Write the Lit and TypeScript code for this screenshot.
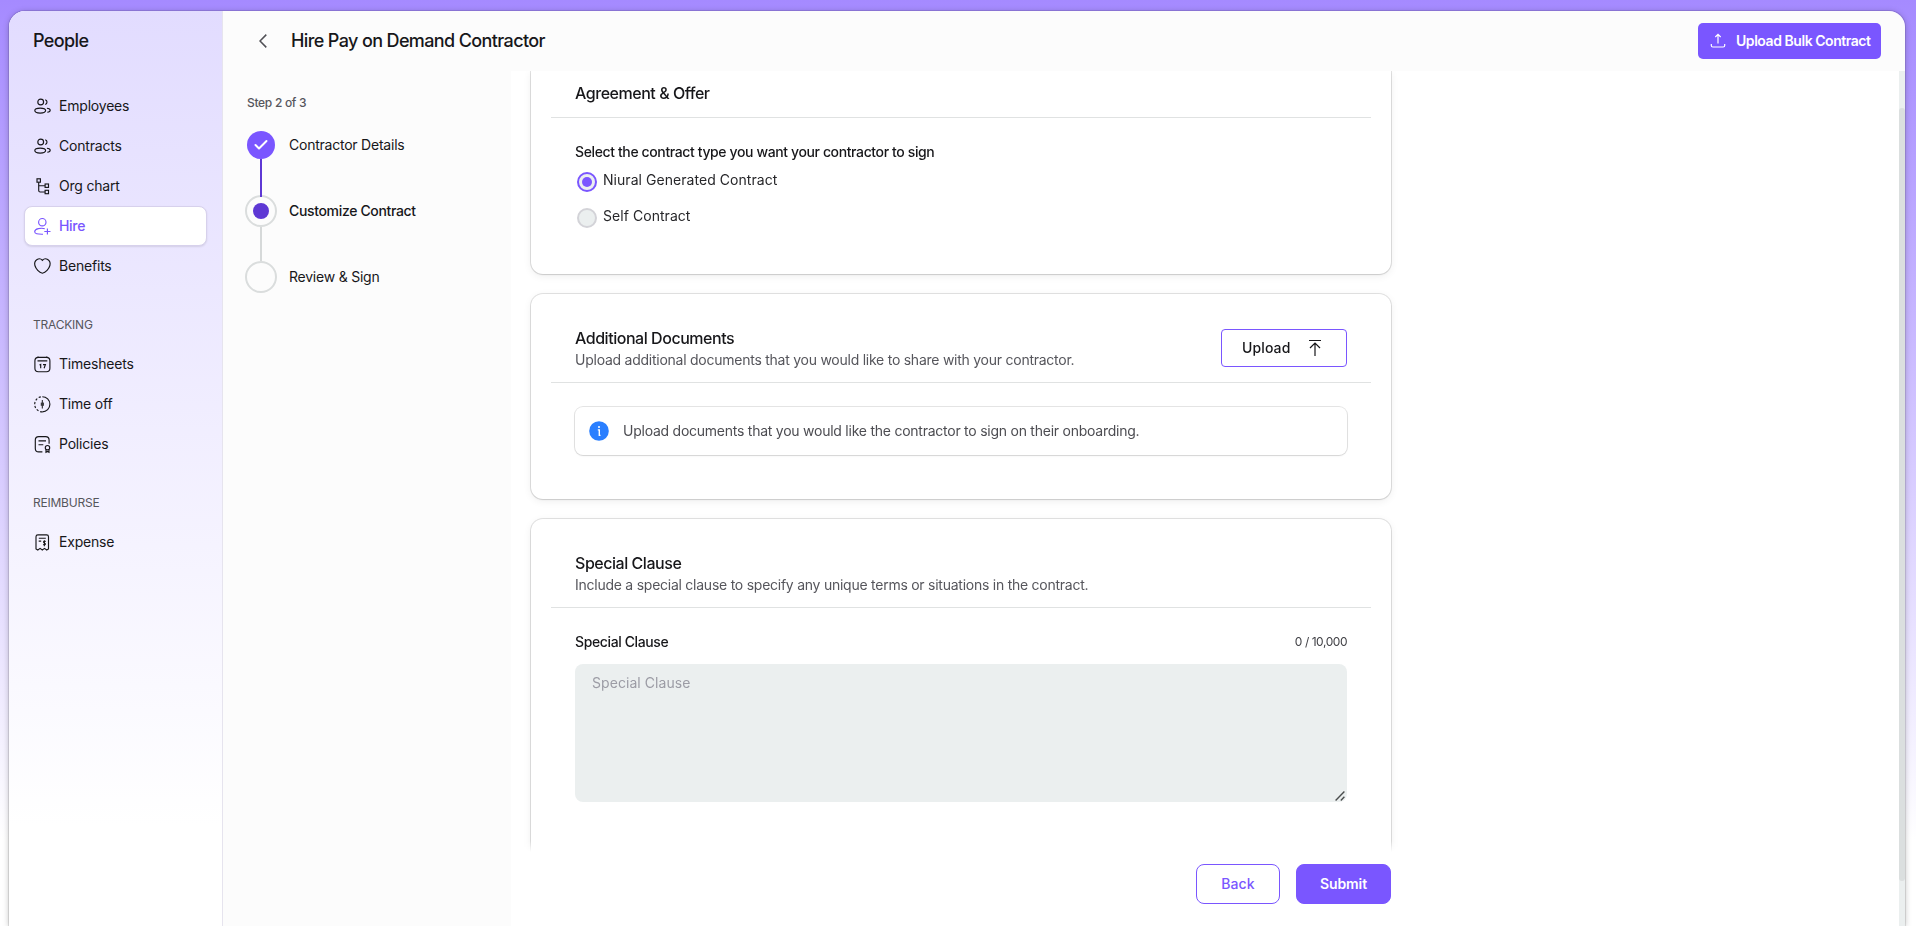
import { LitElement, html, css, svg } from "lit";
import { customElement } from "lit/decorators.js";

const ICONS: Record<string, unknown> = {
  people: svg`<circle cx="6.7" cy="4" r="2.9"/><ellipse cx="6.2" cy="12.6" rx="5.4" ry="2.5"/><path d="M11.2 1.700a2.500 2.500 0 0 1 0 4.800M12.900 10.300c1.900.2 3.300.9 3.300 1.900s-1 1.700-2.900 2"/>`,
  org: svg`<rect x="3" y=".8" width="3.400" height="3.400"/><rect x="11.100" y="6" width="3.400" height="3.400"/><rect x="11.100" y="12.300" width="3.400" height="3.400"/><path d="M4.700 4.200v8.300q0 1.500 1.500 1.500h4.900M4.700 7.700h6.400"/>`,
  hire: svg`<circle cx="8.300" cy="4.200" r="3.700"/><path d="M10.800 10.700c-3.900-1.200-10.100.1-10.100 3 0 2 2.600 2.600 8.300 2.500M13.400 10.400v6.200M10.300 13.500h6.200"/>`,
  heart: svg`<path d="M8.400 2.300C7 .7 4.700.5 3.100 1.500 1.100 2.800.3 5.200.9 7.500c.9 3.400 4.200 7 7.500 7.700 3.300-.7 6.600-4.300 7.500-7.700.6-2.300-.2-4.700-2.200-6C12.100.5 9.800.7 8.400 2.300z"/>`,
  calendar: svg`<rect x=".9" y="1.300" width="15" height="14.400" rx="3.500"/><path d="M3.500 4.900h9.800M4 .6v1.200M12.800 .6v1.200M5.500 9l1.200-.6v3.900M9 8.600h2.400l-1.300 3.700"/>`,
  timeoff: svg`<path d="M8.300.7a7.600 7.600 0 0 1 0 15.200"/><path d="M8.300 15.900a7.600 7.600 0 0 1 0-15.200" stroke-dasharray="2.200 1.800"/><path d="M8.300 4v8.500M7.300 6.600v3.200M9.300 6.600v3.200" stroke-width="1"/>`,
  policies: svg`<path d="M8.400 15.900H4.800Q1.300 15.900 1.300 12.400V4.100Q1.300.6 4.800.6h6.800Q15.100.6 15.100 4.100v3.600M4.500 4.900h7.500M4.500 8.700h4.800"/><circle cx="13.500" cy="11.700" r="2.200"/><path d="M12 13.600v2.700l1.500-.8 1.500.8v-2.700"/>`,
  expense: svg`<path d="M2 15V2.800Q2 .9 3.900.9h8.700Q14.500.9 14.500 2.800V15l-1.800 1-2.200-1.600L8.300 16l-2.200-1.600L3.800 16zM4.800 4.200h7M4.700 7.100h2.500"/><path d="M11.700 7.500c-2-1-3 .9-1.300 1.500 1.900.6.800 2.600-1.300 1.600M10.400 6.200v6"/>`,
};

interface NavItem { label: string; icon: string; active?: boolean }
interface NavGroup { title?: string; items: NavItem[] }

const NAV: NavGroup[] = [
  { items: [
    { label: "Employees", icon: "people" },
    { label: "Contracts", icon: "people" },
    { label: "Org chart", icon: "org" },
    { label: "Hire", icon: "hire", active: true },
    { label: "Benefits", icon: "heart" },
  ] },
  { title: "TRACKING", items: [
    { label: "Timesheets", icon: "calendar" },
    { label: "Time off", icon: "timeoff" },
    { label: "Policies", icon: "policies" },
  ] },
  { title: "REIMBURSE", items: [{ label: "Expense", icon: "expense" }] },
];

@customElement("side-nav")
export class SideNav extends LitElement {
  static styles = css`
    :host { display: block; box-sizing: border-box; width: 214px; flex: none; padding: 0 15px;
      border-right: 1px solid #e6e4ee;
      background: linear-gradient(180deg, #e2dcff 0, #fff 815px); }
    .title { margin: 0; padding-left: 9px; height: 75px; font-size: 18px; font-weight: 500; line-height: 60px; letter-spacing: -.6px; }
    .group { display: flex; flex-direction: column; }
    .caption { height: 20px; margin: 29px 0 0; padding: 0 0 9px 9px; line-height: 20px; font-size: 12px; color: #56565c; letter-spacing: -.22px; }
    .item { box-sizing: border-box; height: 40px; display: flex; align-items: center; gap: 8px; padding-left: 9px;
      font-size: 14px; letter-spacing: -.2px; color: #17171a; border: 1px solid transparent; border-radius: 8px; }
    .item.active { background: #fff; color: #7a56ff; font-weight: 500; border-color: #d7d1ec; box-shadow: 0 1px 2px #0000001a; letter-spacing: -.3px; }
    .text { padding-bottom: 2px; }
    .icon { width: 17px; height: 17px; fill: none; stroke: currentColor; stroke-width: 1.150; flex: none; overflow: visible; }
  `;
  render() {
    return html`<h1 class="title">People</h1>
      ${NAV.map((g) => html`<div class="group">
        ${g.title ? html`<p class="caption">${g.title}</p>` : null}
        ${g.items.map((i) => html`<a class="item ${i.active ? "active" : ""}">
          <svg class="icon" viewBox="0 0 17 17">${ICONS[i.icon]}</svg><span class="text">${i.label}</span></a>`)}
      </div>`)}`;
  }
}

@customElement("step-list")
export class StepList extends LitElement {
  static styles = css`
    :host { display: block; box-sizing: border-box; width: 288px; flex: none; padding: 22px 0 0 22px; }
    .count { margin: 0 0 0 2px; font-size: 12px; line-height: 20px; font-weight: 500; letter-spacing: -.3px; color: #56565c; }
    .steps { display: flex; flex-direction: column; padding-top: 15px; }
    .step { display: flex; align-items: center; gap: 12px; height: 34px; font-size: 14px; letter-spacing: -.23px; }
    .current { font-weight: 500; letter-spacing: -.34px; }
    .text { padding-bottom: 2px; }
    .mark { box-sizing: border-box; width: 32px; height: 32px; border: 2px solid #dadddd; border-radius: 50%; display: grid; place-items: center; }
    .mark.done { width: 28px; height: 28px; margin: 0 2px; background: #7a56ff; border: 0; }
    .dot { width: 16px; height: 16px; border-radius: 50%; background: #5e38d4; }
    .line { width: 2px; height: 34px; margin: -1px 0 -1px 15px; background: #d6d9d9; }
    .line.filled { background: #5e38d4; height: 38px; margin: -3px 0 -3px 15px; z-index: 1; }
    .check { width: 14px; height: 12px; fill: none; stroke: #fff; stroke-width: 2; stroke-linecap: round; stroke-linejoin: round; }
  `;
  render() {
    return html`<p class="count">Step 2 of 3</p>
      <div class="steps">
        <div class="step"><span class="mark done"><svg class="check" viewBox="0 0 14 12"><path d="M1.500 6 5 9.500 12.500 2"/></svg></span><span class="text">Contractor Details</span></div>
        <div class="line filled"></div>
        <div class="step current"><span class="mark"><span class="dot"></span></span><span class="text">Customize Contract</span></div>
        <div class="line"></div>
        <div class="step"><span class="mark"></span><span class="text">Review &amp; Sign</span></div>
      </div>`;
  }
}

@customElement("app-root")
export class AppRoot extends LitElement {
  static styles = css`
    :host { display: block; box-sizing: border-box; height: 926px; overflow: hidden; padding: 11px 11px 0 9px;
      font-family: Inter, "Liberation Sans", sans-serif; color: #17171a;
      background: linear-gradient(180deg, #a58aff 0, #fff 840px); }
    .frame { height: 915px; display: flex; border-radius: 16px 16px 0 0; overflow: hidden; background: #fcfcfc; }
    .shell { border-radius: 16px 16px 0 0; box-shadow: 0 0 0 1px #00000018, 0 1px 6px #00000040; }
    .main { flex: 1; min-width: 0; display: flex; flex-direction: column; }
    .top { height: 60px; display: flex; align-items: center; flex: none; padding: 0 24px 0 36px; }
    .chevron { width: 8px; height: 14px; fill: none; stroke: #505055; stroke-width: 1.500; }
    .heading { flex: 1; margin: 0 0 0 24px; font-size: 18px; line-height: 24px; font-weight: 500; letter-spacing: -.62px; }
    .bulk { height: 36px; width: 183px; box-sizing: border-box; border: 0; border-radius: 5px; background: #7a56ff; color: #fff;
      font: 600 14px Inter, sans-serif; letter-spacing: -.45px; display: flex; align-items: center; gap: 10px; padding: 0 0 0 12px; white-space: nowrap; }
    .bulk-icon { width: 16px; height: 16px; fill: none; stroke: #fff; stroke-width: 1.200; flex: none; }
    .text { padding-bottom: 2px; }
    .body { flex: 1; min-height: 0; display: flex; }
    .content { flex: 1; min-width: 0; height: 855px; background: #fff; display: flex; flex-direction: column; overflow: hidden; }
    .track { width: 6px; background: #ebefef; padding-top: 37px; box-sizing: border-box; }
    .thumb { height: 773px; background: #dbdfdf; border-radius: 3px; }
    .cards { height: 782px; flex: none; box-sizing: border-box; overflow: hidden; padding-left: 20px; display: flex; flex-direction: column; gap: 20px;
      -webkit-mask-image: linear-gradient(#000 770px, transparent 781px); mask-image: linear-gradient(#000 770px, transparent 781px); }
    .card { width: 860px; flex: none; box-sizing: border-box; border-radius: 12px; background: #fff; padding: 0 20px;
      box-shadow: 0 0 0 1px #0000001c, 0 1px 2px #00000014, 0 2px 8px #00000012; }
    .agreement { height: 203px; border-radius: 0 0 12px 12px; }
    .documents { height: 205px; }
    .clause { height: 380px; }
    .head { box-sizing: border-box; padding: 0 24px; border-bottom: 1px solid #e0e2e2; display: flex; justify-content: space-between; }
    .agreement .head { height: 47px; padding-top: 10px; }
    .documents .head, .clause .head { height: 89px; padding-top: 32px; }
    .name { margin: 0; font-size: 16px; line-height: 24px; font-weight: 500; letter-spacing: -.46px; }
    .sub { margin: 0; font-size: 14px; line-height: 20px; letter-spacing: -.25px; color: #56565c; }
    .upload { box-sizing: border-box; width: 126px; height: 38px; margin: 3px 0 0; border: 1px solid #7a56ff; border-radius: 4px; background: #fff; color: #17171a;
      font: 500 14px Inter, sans-serif; letter-spacing: .12px; display: flex; align-items: center; padding: 0 24px 0 20px; justify-content: space-between; }
    .upload-icon { width: 14px; height: 18px; fill: none; stroke: #17171a; stroke-width: 1.200; }
    .fields { padding: 24px 24px 0; }
    .label { margin: 0; font-size: 14px; line-height: 20px; font-weight: 500; letter-spacing: -.38px; }
    .option { height: 36px; display: flex; gap: 6px; padding-left: 2px; font-size: 14px; line-height: 22px; letter-spacing: .05px; color: #27272a; }
    .options { padding-top: 7px; }
    .radio { box-sizing: border-box; width: 20px; height: 20px; margin-top: 3px; border-radius: 50%; border: 2px solid #d3d3d8; background: #ebefef; display: grid; place-items: center; }
    .radio.on { border-color: #7a56ff; background: #ebeff0; }
    .bead { width: 10px; height: 10px; border-radius: 50%; background: #7a56ff; }
    .notice { margin: 24px 24px 0; height: 48px; box-shadow: 0 0 0 1px #0000001a, 0 1px 2px #00000014; border-radius: 8px; display: flex; align-items: center; gap: 14px; padding-left: 14px; font-size: 14px; letter-spacing: -.245px; color: #4d4d52; }
    .info { width: 20px; height: 20px; }
    .row { display: flex; justify-content: space-between; }
    .counter { font-size: 12px; line-height: 20px; letter-spacing: -.45px; color: #3f3f44; }
    .box { position: relative; margin-top: 12px; }
    .area { display: block; box-sizing: border-box; width: 100%; height: 138px; margin: 0; border: 0; border-radius: 8px; padding: 9px 17px; background: #ebefef;
      font: 14px/20px Inter, sans-serif; letter-spacing: .06px; resize: none; }
    .area::placeholder { color: #9c9ca5; opacity: 1; }
    .grip { position: absolute; right: 2px; bottom: 1px; width: 10px; height: 10px; fill: none; stroke: #4a4d4d; stroke-width: 1.400; }
    .actions { width: 860px; margin: 11px 0 0 20px; display: flex; justify-content: flex-end; gap: 16px; }
    .btn { box-sizing: border-box; height: 40px; border-radius: 8px; font: 500 14px Inter, sans-serif; letter-spacing: .05px; border: 1px solid #7a56ff; padding: 0 0 1px; }
    .back { width: 84px; color: #7a56ff; background: #fff; }
    .submit { width: 95px; color: #fff; background: #7a56ff; font-weight: 600; letter-spacing: -.1px; }
  `;
  render() {
    return html`<div class="shell"><div class="frame">
      <side-nav></side-nav>
      <div class="main">
        <header class="top">
          <svg class="chevron" viewBox="0 0 8 14"><path d="M7.300.6 1 7l6.300 6.400"/></svg>
          <h2 class="heading">Hire Pay on Demand Contractor</h2>
          <button class="bulk"><svg class="bulk-icon" viewBox="0 0 16 16"><path d="M8 10.500V1.500M5.300 4 8 1.300 10.700 4M1.300 11v1.500q0 1.500 1.500 1.500h10.400q1.500 0 1.500-1.500V11"/></svg><span class="text">Upload Bulk Contract</span></button>
        </header>
        <div class="body">
          <step-list></step-list>
          <main class="content">
            <div class="cards">
              <section class="card agreement">
                <div class="head"><h3 class="name">Agreement &amp; Offer</h3></div>
                <div class="fields">
                  <p class="label">Select the contract type you want your contractor to sign</p>
                  <div class="options">
                    <div class="option"><span class="radio on"><span class="bead"></span></span>Niural Generated Contract</div>
                    <div class="option"><span class="radio"></span>Self Contract</div>
                  </div>
                </div>
              </section>
              <section class="card documents">
                <div class="head">
                  <div><h3 class="name">Additional Documents</h3><p class="sub">Upload additional documents that you would like to share with your contractor.</p></div>
                  <button class="upload"><span class="text">Upload</span><svg class="upload-icon" viewBox="0 0 14 18"><path d="M1 1.500h12M7 17V4M2 9l5-5 5 5"/></svg></button>
                </div>
                <div class="notice"><svg class="info" viewBox="0 0 20 20"><circle cx="10" cy="10" r="9.800" fill="#2a7fff"/><path d="M8.800 8.900h1.500v5.500h1.200" fill="none" stroke="#fff" stroke-width="1.400"/><circle cx="10" cy="6" r="1" fill="#fff"/></svg><span class="text">Upload documents that you would like the contractor to sign on their onboarding.</span></div>
              </section>
              <section class="card clause">
                <div class="head"><div><h3 class="name">Special Clause</h3><p class="sub">Include a special clause to specify any unique terms or situations in the contract.</p></div></div>
                <div class="fields">
                  <div class="row"><label class="label">Special Clause</label><span class="counter">0 / 10,000</span></div>
                  <div class="box"><textarea class="area" placeholder="Special Clause"></textarea>
                    <svg class="grip" viewBox="0 0 10 10"><path d="M.6 9.400 9.400.6M5.800 9.400l3.600-3.600"/></svg></div>
                </div>
              </section>
            </div>
            <div class="actions"><button class="btn back">Back</button><button class="btn submit">Submit</button></div>
          </main>
          <div class="track"><div class="thumb"></div></div>
        </div>
      </div>
    </div></div>`;
  }
}
